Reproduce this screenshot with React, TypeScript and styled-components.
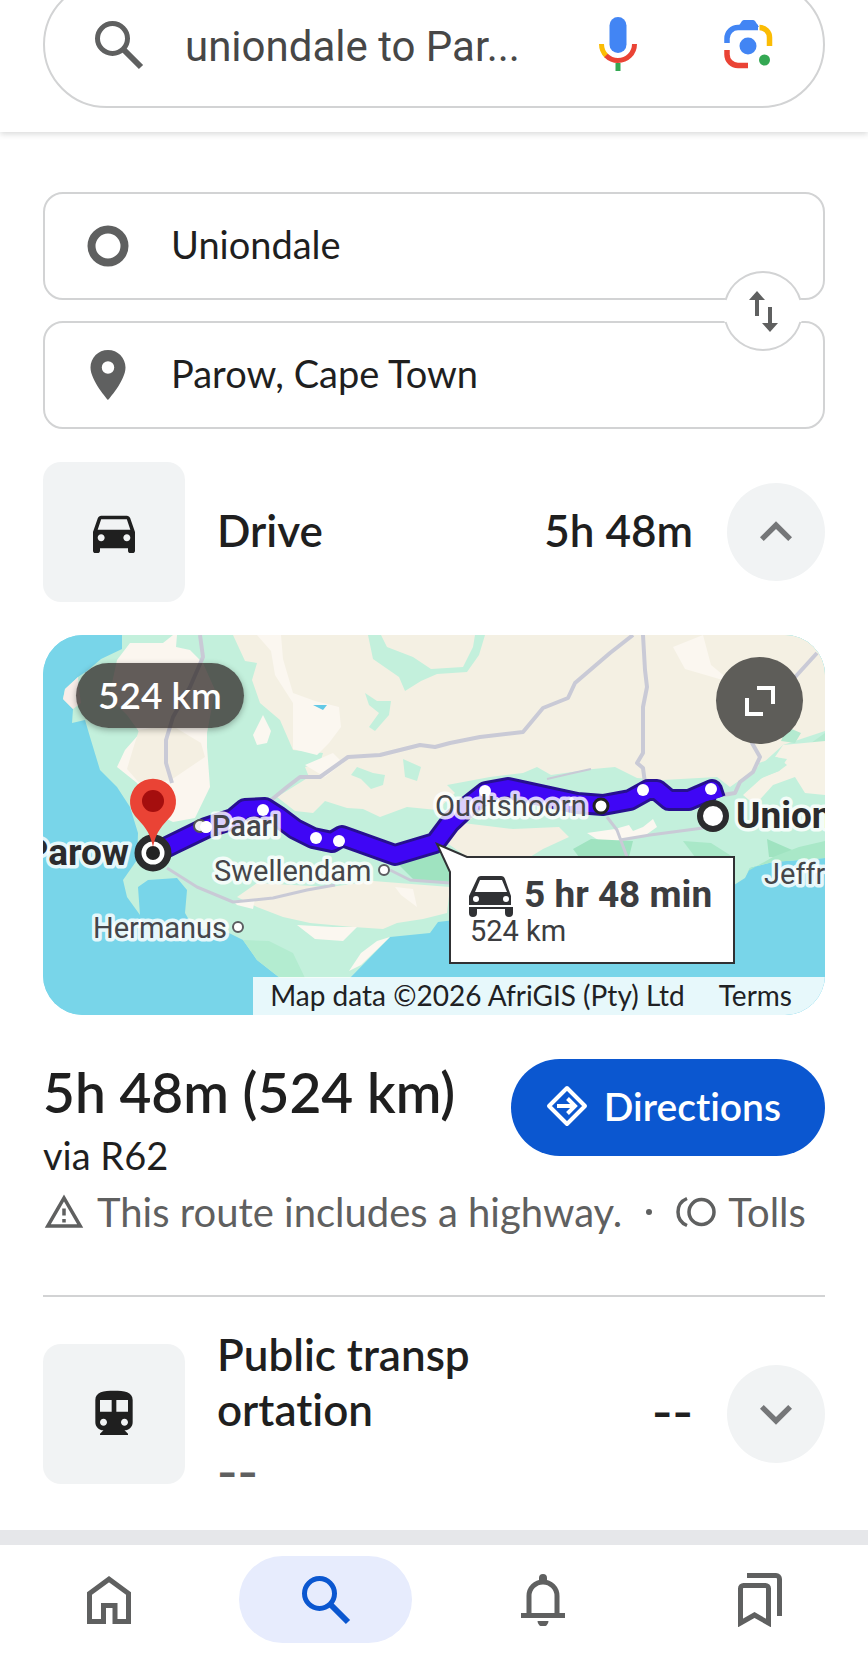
import React from 'react';
import styled, { createGlobalStyle } from 'styled-components';
import {
  MdDirectionsCar,
  MdDirectionsTransit,
  MdExpandLess,
  MdExpandMore,
  MdPlace,
  MdOutlineWarningAmber,
} from 'react-icons/md';

const sans = '"Lato", "Open Sans", sans-serif';
const roboto = '"Roboto", "Liberation Sans", sans-serif';

const color = {
  ink: '#1f1f1f',
  muted: '#5f6060',
  line: '#d2d3d4',
  tile: '#f1f3f4',
  blue: '#0b57d0',
};

const GlobalStyle = createGlobalStyle`
  *, *::before, *::after { box-sizing: border-box; }
  body {
    margin: 0;
    background: #fff;
    color: ${color.ink};
    font-family: ${sans};
    font-variant-ligatures: no-common-ligatures;
  }
  button, input { font: inherit; color: inherit; font-variant-ligatures: inherit; }
  button { border: 0; padding: 0; background: none; cursor: pointer; }
  svg { display: block; flex: none; }
`;

const Page = styled.div`
  display: flex;
  flex-direction: column;
  overflow: hidden;
`;

const Header = styled.header`
  padding: 0 43px 24px;
  box-shadow: 0 2px 6px rgba(60, 64, 67, 0.2);
`;

const SearchBox = styled.form`
  display: flex;
  align-items: center;
  height: 127px;
  margin-top: -19px;
  padding: 0 49px;
  border: 2px solid ${color.line};
  border-radius: 64px;
  color: ${color.muted};
`;

const SearchInput = styled.input`
  flex: 1;
  min-width: 0;
  margin-left: 41px;
  padding: 4px 0 0;
  border: 0;
  outline: 0;
  background: none;
  color: #474747;
  font-family: ${roboto};
  font-size: 42px;
  line-height: 56px;
`;

const SearchTools = styled.div`
  display: flex;
  align-items: center;
  gap: 80px;
`;

const Main = styled.main`
  display: flex;
  flex-direction: column;
  padding: 60px 43px 29px;
`;

const Endpoints = styled.section`
  position: relative;
  display: flex;
  flex-direction: column;
  gap: 21px;
`;

const Endpoint = styled.label`
  display: flex;
  align-items: center;
  gap: 41px;
  height: 108px;
  padding: 0 41px;
  border: 2px solid ${color.line};
  border-radius: 20px;
  color: ${color.muted};
`;

const EndpointInput = styled.input`
  flex: 1;
  min-width: 0;
  padding: 0 0 4px;
  border: 0;
  outline: 0;
  background: none;
  color: ${color.ink};
  font-size: 38px;
  line-height: 48px;
`;

const IconSlot = styled.span`
  display: flex;
  justify-content: center;
  width: 44px;
`;

const SwapButton = styled.button`
  position: absolute;
  right: 22px;
  top: calc(50% - 40px);
  color: ${color.muted};
`;

const ModeRow = styled.section`
  display: flex;
  align-items: center;
`;

const DriveRow = styled(ModeRow)`
  margin-top: 33px;
`;

const TransitRow = styled(ModeRow)`
  margin-top: 30px;
`;

const ModeTile = styled.div`
  display: flex;
  align-items: center;
  justify-content: center;
  flex: none;
  width: 142px;
  height: 140px;
  border-radius: 18px;
  background: ${color.tile};
`;

const ModeText = styled.div`
  flex: 1;
  padding: 0 0 4px 32px;
`;

const ModeName = styled.h2`
  max-width: 272px;
  margin: 0;
  font-size: 44px;
  font-weight: 600;
  line-height: 55px;
  word-break: break-all;
`;

const ModeNote = styled.p`
  margin: 10px 0 0;
  color: ${color.muted};
  font-family: "Inter", ${sans};
  font-size: 44px;
  font-weight: 600;
  line-height: 50px;
`;

const ModeTime = styled.span<{ $empty?: boolean }>`
  padding-bottom: 4px;
  font-family: ${(p) => (p.$empty ? `"Inter", ${sans}` : sans)};
  font-size: 44px;
  font-weight: 600;
  line-height: 55px;
`;

const ToggleButton = styled.button`
  display: flex;
  align-items: center;
  justify-content: center;
  flex: none;
  width: 98px;
  height: 98px;
  margin-left: 34px;
  border-radius: 50%;
  background: ${color.tile};
  color: #757678;
`;

const MapCard = styled.section`
  position: relative;
  height: 380px;
  margin-top: 33px;
  overflow: hidden;
  border-radius: 40px;
  background: #78d5e9;
`;

const MapDrawing = styled.svg`
  width: 100%;
  height: 100%;
`;

const DistanceChip = styled.div`
  position: absolute;
  top: 28px;
  left: 33px;
  padding: 0 22px 2px;
  border-radius: 33px;
  background: rgba(50, 44, 42, 0.76);
  box-shadow: 0 2px 6px rgba(0, 0, 0, 0.3);
  color: #fff;
  font-size: 37px;
  font-weight: 600;
  line-height: 63px;
`;

const ExpandButton = styled.button`
  position: absolute;
  top: 22px;
  right: 22px;
  display: flex;
  align-items: center;
  justify-content: center;
  width: 87px;
  height: 87px;
  border-radius: 50%;
  background: #5e5d59;
`;

const Attribution = styled.div`
  position: absolute;
  right: 0;
  bottom: 0;
  display: flex;
  gap: 34px;
  padding: 0 33px 2px 17px;
  background: rgba(255, 255, 255, 0.82);
  color: #202124;
  font-size: 28px;
  line-height: 36px;
  white-space: nowrap;
`;

const TermsLink = styled.a`
  color: inherit;
  text-decoration: none;
`;

const Summary = styled.section`
  display: flex;
  align-items: flex-start;
  justify-content: space-between;
  margin-top: 44px;
`;

const RouteTime = styled.h1`
  margin: 0;
  font-size: 55px;
  font-weight: 600;
  line-height: 66px;
  white-space: nowrap;
`;

const RouteVia = styled.p`
  margin: 0;
  font-size: 38px;
  line-height: 60px;
`;

const DirectionsButton = styled.button`
  display: flex;
  align-items: center;
  gap: 16px;
  height: 97px;
  padding: 0 44px 4px 35px;
  border-radius: 49px;
  background: ${color.blue};
  color: #fff;
  font-size: 39px;
  font-weight: 600;
`;

const Notices = styled.p`
  display: flex;
  align-items: center;
  gap: 12px;
  margin: 0;
  color: ${color.muted};
  font-size: 40px;
  line-height: 54px;
  white-space: nowrap;
`;

const Dot = styled.span`
  width: 6px;
  height: 6px;
  margin: 0 12px;
  border-radius: 50%;
  background: ${color.muted};
`;

const Divider = styled.hr`
  width: 100%;
  height: 2px;
  margin: 56px 0 0;
  border: 0;
  background: ${color.line};
`;

const TabBar = styled.nav`
  display: grid;
  grid-template-columns: repeat(4, 1fr);
  justify-items: center;
  padding: 11px 0 16px;
  border-top: 15px solid #e6e7ea;
`;

const Tab = styled.button<{ $active?: boolean }>`
  display: flex;
  align-items: center;
  justify-content: center;
  width: 173px;
  height: 87px;
  border-radius: 44px;
  background: ${(p) => (p.$active ? '#e7ecfd' : 'transparent')};
  color: ${(p) => (p.$active ? color.blue : color.muted)};
`;

const SearchIcon = () => (
  <svg width="50" height="50" viewBox="0 0 50 50" fill="none" stroke="currentColor" strokeWidth="5">
    <circle cx="18.500" cy="18.500" r="15" />
    <path d="M29 29L47 47" strokeWidth="6" />
  </svg>
);

const MicIcon = () => (
  <svg width="48" height="58" viewBox="0 0 48 58" fill="none" strokeWidth="5">
    <rect x="15.500" y="1" width="17" height="36" rx="8.500" fill="#4285f4" />
    <path d="M7.500 28c0 5 2 9 5 12" stroke="#fbbc04" />
    <path d="M12 39.500c3 3 7 5 12 5 9 0 16.500-7 16.500-16.500" stroke="#ea4335" />
    <path d="M24 47v8" stroke="#34a853" />
  </svg>
);

const LensIcon = () => (
  <svg width="52" height="52" viewBox="0 0 52 52" fill="none" strokeWidth="5.500">
    <path d="M5 24v-4.500a11 11 0 0 1 11-11h20" stroke="#4285f4" />
    <path d="M16 8l4-6q1-1 2-1h9q1 0 2 1l4 6z" fill="#4285f4" />
    <path d="M37.500 8.500a10 10 0 0 1 10 10v8.500" stroke="#fbbc04" />
    <path d="M5 31v4.500a11 11 0 0 0 11 11h10" stroke="#ea4335" />
    <circle cx="26" cy="27" r="8.500" fill="#4285f4" />
    <circle cx="42.500" cy="41" r="5.500" fill="#34a853" />
  </svg>
);

const RingIcon = () => (
  <svg width="42" height="42" viewBox="0 0 42 42" fill="none" stroke="currentColor" strokeWidth="8">
    <circle cx="21" cy="21" r="16.500" />
  </svg>
);

const SwapIcon = () => (
  <svg width="80" height="80" viewBox="0 0 80 80">
    <circle cx="40" cy="40" r="40" fill="#fff" />
    <g fill="none" stroke={color.line} strokeWidth="2">
      <path d="M2.600 29a39 39 0 0 1 74.800 0" />
      <path d="M2.600 51a39 39 0 0 0 74.800 0" />
    </g>
    <g stroke="currentColor" strokeWidth="4" fill="currentColor">
      <path d="M34 45V27M47 36v18" />
      <path d="M34 20l8 9H26zM47 61l8-9H39z" stroke="none" />
    </g>
  </svg>
);

const ExpandIcon = () => (
  <svg width="32" height="32" viewBox="0 0 32 32" fill="none" stroke="#fff" strokeWidth="4">
    <path d="M13 3h16v16M3 13v16h16" />
  </svg>
);

const DirectionsIcon = () => (
  <svg width="42" height="42" viewBox="0 0 42 42" fill="none" stroke="currentColor" strokeWidth="4" strokeLinejoin="round">
    <path d="M21 3L39 21L21 39L3 21z" />
    <path d="M11 21h17M21.500 13.500L29 21l-7.500 7.500" strokeLinejoin="miter" />
  </svg>
);

const TollIcon = () => (
  <svg width="40" height="32" viewBox="0 0 40 32" fill="none" stroke="currentColor" strokeWidth="3.500">
    <circle cx="25.500" cy="16" r="12.500" />
    <path d="M11 2.500C5 5 2 10 2 16s3 11 9 13.500" />
  </svg>
);

const HomeIcon = () => (
  <svg width="44" height="48" viewBox="0 0 44 48" fill="none" stroke="currentColor" strokeWidth="5">
    <path d="M2.500 17.500L22 3.200l19.500 14.300v28H28v-16H16.500v16h-14z" />
  </svg>
);

const BellIcon = () => (
  <svg width="44" height="52" viewBox="0 0 44 52" fill="none" stroke="currentColor" strokeWidth="5">
    <path d="M8 40V22a14 14 0 0 1 28 0v18M0 41.500h44" />
    <path d="M18 8V4a4 4 0 0 1 8 0v4zM16.500 47h11a5.500 5.500 0 0 1-11 0z" fill="currentColor" stroke="none" />
  </svg>
);

const BookmarksIcon = () => (
  <svg width="44" height="54" viewBox="0 0 44 54" fill="none" stroke="currentColor" strokeWidth="5">
    <path d="M2.500 50V15.500a3 3 0 0 1 3-3h22a3 3 0 0 1 3 3V50l-14-8z" />
    <path d="M9 2.500h29a3.500 3.500 0 0 1 3.500 3.500v37" />
  </svg>
);

const MapLabel = styled.text<{ $strong?: boolean; $medium?: boolean }>`
  font-family: ${roboto};
  font-size: ${(p) => (p.$strong ? 37 : 29)}px;
  font-weight: ${(p) => (p.$strong ? 700 : p.$medium ? 500 : 400)};
  fill: ${(p) => (p.$strong ? '#2b2b2d' : '#45464a')};
  stroke: rgba(255, 255, 255, 0.82);
  stroke-width: 7px;
  stroke-linejoin: round;
  paint-order: stroke;
`;

const CalloutText = styled.text<{ $strong?: boolean }>`
  font-family: ${roboto};
  font-size: ${(p) => (p.$strong ? 37 : 29)}px;
  font-weight: ${(p) => (p.$strong ? 700 : 400)};
  fill: #3c3d40;
`;

const ROUTE =
  'M120 214L130 209L163 193L190 184L202 174L222 173L236 182L252 194L270 203L289 207L299 201L352 220L392 208L407 188L424 172L443 157L465 153L534 168L560 170L587 165L605 155L614 155L626 165L646 165L669 155L672 164';

const STOPS = [
  [163, 192],
  [220, 175],
  [273, 203],
  [296, 206],
  [442, 156],
  [600, 155],
  [668, 154],
];

const RouteMap = () => (
  <MapDrawing viewBox="0 0 782 380" preserveAspectRatio="xMidYMid slice" role="img" aria-label="Route from Uniondale to Parow">
    <rect width="782" height="380" fill="#78d5e9" />
    <path
      fill="#c3f0dc"
      d="M79 0L79 14L58 24L44 36L35 42L22 54L20 64L30 74L29 88L42 85L47 102L57 135L74 152L87 172L95 198L94 225L80 245L84 262L97 280L95 252L105 245L134 243L144 255L142 278L150 292L186 298L200 305L214 325L237 343L307 343L347 302L387 298L395 287L420 284L560 270L691 250L702 243L707 233L730 227L782 223L782 0z"
    />
    <path fill="#f9ede9" d="M35 42L22 54L20 64L30 74L38 68L36 54z" />
    <path fill="#b3ecd0" d="M200 305L214 325L237 343L262 343L250 318L226 306z" />
    <path
      fill="#fbf6ef"
      d="M74 25L87 8L120 8L130 0L134 0L133 12L147 15L160 28L172 55L164 98L164 112L167 152L152 183L130 187L112 178L94 148L74 132L82 115L97 98L84 80L66 62z"
    />
    <path fill="#f4efe2" d="M96 95L128 90L158 108L162 122L128 145L98 150L84 134L90 114z" />
    <path
      fill="#f4f0e3"
      d="M190 0L202 26L214 28L209 45L217 68L237 85L250 115L280 118L277 128L262 132L266 142L250 152L234 162L252 176L270 178L282 166L304 173L320 174L337 182L364 172L394 175L412 158L404 150L447 142L480 138L494 132L508 140L550 134L572 132L594 143L620 145L674 142L687 152L707 138L720 128L740 110L782 96L782 0z"
    />
    <path fill="#fbf7f0" d="M214 0L228 16L232 40L250 68L250 114L274 120L286 108L298 92L296 72L272 66L250 58L240 24L238 0z" />
    <path fill="#fbf7f0" d="M220 80L228 96L224 108L214 110L210 100zM262 130L290 118L300 128L282 142zM630 12L660 0L668 30L690 48L642 34z" />
    <path fill="#c3f0dc" d="M325 0L338 0L344 12L370 22L388 34L420 32L430 12L432 0L442 0L436 20L424 37L394 39L378 46L362 56L356 42L330 24z" />
    <path fill="#c3f0dc" d="M322 58L334 66L348 66L346 80L332 96L326 92L336 78L326 70zM308 140L314 132L330 138L342 140L340 150L328 154L318 144zM360 124L378 132L374 146L362 142z" />
    <path fill="#62c9e6" d="M270 70h14l-4 5z" />
    <path fill="#b4ead0" d="M744 92L758 98L752 108L738 106zM782 98V110L768 118L768 108z" />
    <path
      fill="#f4f0e3"
      d="M194 262L214 248L287 252L330 246L407 252L404 278L380 284L354 288L340 294L310 292L267 288L240 282L214 272z"
    />
    <path fill="#fbf7f0" d="M190 266L212 264L210 274L194 270zM254 290L272 304L300 306L314 292L290 292zM347 302L318 330L306 336L318 318L334 306zM352 252L370 254L374 272L358 260z" />
    <path fill="#f4efe2" d="M404 208L420 188L470 194L516 192L526 202L500 214L487 222L424 222z" />
    <path fill="#fbf7f0" d="M544 198L572 194L586 190L590 196L600 192L610 184L614 192L600 202L560 208z" />
    <path fill="#f6f2e6" d="M740 110L782 106V160L762 158L752 142L730 150L712 170L700 160L720 142L736 136L744 124L732 122z" />
    <path fill="#c3f0dc" d="M716 128L734 122L744 130L736 136L712 146zM720 178L756 162L782 170V196L720 184z" />
    <path fill="#9fe3c0" d="M354 228L394 216L407 222V248L372 246zM530 214L548 204L590 206L586 222L536 222zM724 204L756 218L754 222L726 222z" />
    <path fill="#a9e8c8" d="M640 206L668 208L690 222L652 222z" />
    <path fill="#a9e8c8" d="M782 206L756 212L730 222L705 236L700 243L707 233L730 227L782 223z" />
    <g fill="none" stroke="#c9cad6" strokeWidth="4" strokeLinejoin="round">
      <path d="M157 0L160 22L147 52L130 82L123 105L123 128L129 148" />
      <path d="M227 166L244 152L257 142L277 142L305 122L337 120L377 110L392 112L407 108L437 102L480 97L500 73L525 63L532 48L567 18L590 0" />
      <path d="M600 0L602 35L604 52L600 72L600 118L594 128L600 133L602 148" />
      <path d="M774 18L754 40L709 90L709 108L717 122L710 137L697 147L692 158L680 160" />
      <path d="M564 182L574 195L584 222M577 205L607 200L660 193" strokeWidth="3" />
      <path d="M124 233L154 252L190 267L230 263L264 255L292 250M347 235L367 245L407 248" strokeWidth="3" />
      <path d="M504 144L530 138L548 134" strokeWidth="2" />
    </g>
    <path d={ROUTE} fill="none" stroke="#27108f" strokeWidth="22" strokeLinejoin="round" />
    <path d={ROUTE} fill="none" stroke="#3f06f5" strokeWidth="16" strokeLinejoin="round" />
    <g fill="#fff">
      {STOPS.map(([x, y]) => (
        <circle key={x} cx={x} cy={y} r="6" />
      ))}
      <circle cx="558" cy="171" r="7" stroke="#222" strokeWidth="3" />
      <circle cx="157" cy="191" r="6" fill="#eee" stroke="#555" strokeWidth="2" />
      <circle cx="163" cy="192" r="6" />
    </g>
    <MapLabel $medium x="169" y="201">Paarl</MapLabel>
    <MapLabel x="171" y="246">Swellendam</MapLabel>
    <MapLabel x="50" y="303">Hermanus</MapLabel>
    <MapLabel x="392" y="181">Oudtshoorn</MapLabel>
    <MapLabel x="721" y="249">Jeffr</MapLabel>
    <MapLabel $strong x="693" y="193">Union</MapLabel>
    <MapLabel $strong x="86" y="230" textAnchor="end">Parow</MapLabel>
    <g fill="#fff" stroke="#5b5c60" strokeWidth="2">
      <circle cx="341" cy="235" r="5" />
      <circle cx="195" cy="292" r="5" />
    </g>
    <g fill="#fff" stroke="#2b2b2d">
      <circle cx="110" cy="218" r="15" strokeWidth="7" />
      <circle cx="670" cy="181" r="13" strokeWidth="6" />
    </g>
    <circle cx="110" cy="218" r="7" fill="#222" />
    <path d="M110 212C107 196 100 190 92 181a23 23 0 1 1 36 0C120 190 113 196 110 212z" fill="#ea4335" />
    <circle cx="110" cy="166" r="11" fill="#a50e0e" />
    <path d="M394 209L424 222H691V328H407V237z" fill="#fff" stroke="#303134" strokeWidth="2" />
    <g fill="#303134">
      <path d="M434 244q1-3 4-3h20q3 0 4 3l6 17v9h-42v-9zM437 245l-5 12h32l-5-12z" fillRule="evenodd" />
      <path d="M426 272h44v2h-44zM426 274h8v4a4 4 0 0 1-8 0zM462 274h8v4a4 4 0 0 1-8 0z" />
      <circle cx="433" cy="264" r="3" fill="#fff" />
      <circle cx="463" cy="264" r="3" fill="#fff" />
    </g>
    <CalloutText $strong x="481" y="272">5 hr 48 min</CalloutText>
    <CalloutText x="427" y="306">524 km</CalloutText>
  </MapDrawing>
);

export default function App() {
  return (
    <Page>
      <GlobalStyle />
      <Header>
        <SearchBox onSubmit={(e) => e.preventDefault()}>
          <SearchIcon />
          <SearchInput aria-label="Search" defaultValue="uniondale to Par..." />
          <SearchTools>
            <button type="button" aria-label="Search by voice"><MicIcon /></button>
            <button type="button" aria-label="Search by image"><LensIcon /></button>
          </SearchTools>
        </SearchBox>
      </Header>

      <Main>
        <Endpoints>
          <Endpoint>
            <IconSlot><RingIcon /></IconSlot>
            <EndpointInput aria-label="Starting point" defaultValue="Uniondale" />
          </Endpoint>
          <Endpoint>
            <IconSlot><MdPlace size={60} /></IconSlot>
            <EndpointInput aria-label="Destination" defaultValue="Parow, Cape Town" />
          </Endpoint>
          <SwapButton aria-label="Swap start and destination"><SwapIcon /></SwapButton>
        </Endpoints>

        <DriveRow>
          <ModeTile><MdDirectionsCar size={56} /></ModeTile>
          <ModeText><ModeName>Drive</ModeName></ModeText>
          <ModeTime>5h 48m</ModeTime>
          <ToggleButton aria-label="Collapse drive"><MdExpandLess size={64} /></ToggleButton>
        </DriveRow>

        <MapCard>
          <RouteMap />
          <DistanceChip>524 km</DistanceChip>
          <ExpandButton aria-label="Expand map"><ExpandIcon /></ExpandButton>
          <Attribution>
            <span>Map data ©2026 AfriGIS (Pty) Ltd</span>
            <TermsLink href="#terms">Terms</TermsLink>
          </Attribution>
        </MapCard>

        <Summary>
          <div>
            <RouteTime>5h 48m (524 km)</RouteTime>
            <RouteVia>via R62</RouteVia>
          </div>
          <DirectionsButton><DirectionsIcon />Directions</DirectionsButton>
        </Summary>
        <Notices>
          <MdOutlineWarningAmber size={42} />
          <span>This route includes a highway.</span>
          <Dot />
          <TollIcon />
          <span>Tolls</span>
        </Notices>
        <Divider />

        <TransitRow>
          <ModeTile><MdDirectionsTransit size={56} /></ModeTile>
          <ModeText>
            <ModeName>Public transportation</ModeName>
            <ModeNote>--</ModeNote>
          </ModeText>
          <ModeTime $empty>--</ModeTime>
          <ToggleButton aria-label="Expand public transportation"><MdExpandMore size={64} /></ToggleButton>
        </TransitRow>
      </Main>

      <TabBar>
        <Tab aria-label="Home"><HomeIcon /></Tab>
        <Tab $active aria-label="Search"><SearchIcon /></Tab>
        <Tab aria-label="Notifications"><BellIcon /></Tab>
        <Tab aria-label="Saved"><BookmarksIcon /></Tab>
      </TabBar>
    </Page>
  );
}
